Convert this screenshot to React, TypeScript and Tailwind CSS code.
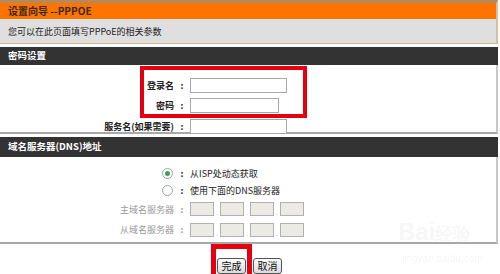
import React from "react";

const font = { fontFamily: '"Noto Sans CJK SC", "Liberation Sans", sans-serif' };

function Row({ label, children, gray }: { label: string; children: React.ReactNode; gray?: boolean }) {
  return (
    <div className="flex items-center h-[20.5px]">
      <div className={`w-[174px] text-right text-[9px] leading-none ${gray ? "text-[#9a9a9a]" : "text-[#222] font-bold"}`}>{label}</div>
      <div className={`w-[16px] text-center text-[9px] leading-none font-bold ${gray ? "text-[#9a9a9a]" : "text-[#222]"}`}>:</div>
      {children}
    </div>
  );
}

function RadioRow({ checked, label }: { checked?: boolean; label: string }) {
  return (
    <div className="flex items-center h-[17px]">
      <div className="w-[174px] flex justify-end pr-[1px]">
        <div className="w-[11px] h-[11px] rounded-full border border-[#9aa4a0] bg-white flex items-center justify-center">
          {checked && <div className="w-[5px] h-[5px] rounded-full bg-[#4a9a5a]" />}
        </div>
      </div>
      <div className="w-[16px] text-center text-[9px] leading-none font-bold text-[#222]">:</div>
      <div className="text-[9px] leading-none text-[#222]">{label}</div>
    </div>
  );
}

function IpBoxes() {
  return (
    <div className="flex items-end">
      {[0, 1, 2, 3].map((i) => (
        <React.Fragment key={i}>
          {i > 0 && <div className="w-[6px] text-center text-[8px] leading-none text-[#ccc]">.</div>}
          <div className="w-[24px] h-[14px] bg-[#eceae4] border border-[#b0b0b0]" />
        </React.Fragment>
      ))}
    </div>
  );
}

export default function App() {
  return (
    <div className="relative w-[500px] h-[274px] overflow-hidden bg-white" style={font}>
      <div className="w-[498px]">
        <div className="border-t-[3px] border-t-[#b4895c] border-r-2 border-r-[#d8bfa4] border-b border-b-[#d2b69a]">
          <div className="h-[16px] bg-[#ff7300] flex items-center pl-[8px] text-[10px] font-bold text-[#3a2a1a] leading-none">设置向导 --PPPOE</div>
          <div className="h-[24px] bg-[#dfdfdf] flex items-center pl-[8px] text-[9px] text-[#222] leading-none">您可以在此页面填写PPPoE的相关参数</div>
        </div>

        <div className="mt-[3px] h-[18px] bg-[#333333] flex items-center pl-[8px] text-[9.5px] font-bold text-white leading-none">密码设置</div>
        <div className="h-[69px] border-r-2 border-r-[#c8c8c8] border-b-2 border-b-[#a8a8a8] pt-[10px]">
          <Row label="登录名">
            <div className="w-[97px] h-[15px] border border-[#a8a8a8] bg-white" />
          </Row>
          <Row label="密码">
            <div className="w-[89px] h-[15px] border border-[#a8a8a8] bg-white" />
          </Row>
          <Row label="服务名(如果需要)">
            <div className="w-[97px] h-[15px] border border-[#a8a8a8] bg-white" />
          </Row>
        </div>

        <div className="mt-[3px] h-[20px] bg-[#333333] flex items-center pl-[8px] text-[9.5px] font-bold text-white leading-none">域名服务器(DNS)地址</div>
        <div className="h-[87px] border-r-2 border-r-[#c8c8c8] border-b-2 border-b-[#a8a8a8] pt-[8px]">
          <RadioRow checked label="从ISP处动态获取" />
          <RadioRow label="使用下面的DNS服务器" />
          <Row label="主域名服务器" gray>
            <IpBoxes />
          </Row>
          <Row label="从域名服务器" gray>
            <IpBoxes />
          </Row>
        </div>

        <div className="flex pl-[211px] h-[31px]">
          <div className="border-[5px] border-b-0 border-[#e4000f] w-[41px] h-[31px] pt-[2px] pl-[1px]">
            <button className="w-[29px] h-[16px] border border-[#555] rounded-[3px] bg-gradient-to-b from-[#fafafa] to-[#dcdcdc] text-[10px] leading-none text-[#111]">完成</button>
          </div>
          <div className="pt-[7px] pl-[1px]">
            <button className="w-[29px] h-[16px] border border-[#555] rounded-[3px] bg-gradient-to-b from-[#fafafa] to-[#dcdcdc] text-[10px] leading-none text-[#111]">取消</button>
          </div>
        </div>
      </div>

      <div className="absolute left-[140px] top-[66px] w-[167px] h-[52px] border-[4px] border-[#e4000f]" />

      <div className="absolute left-[398px] top-[220px] text-[24px] font-bold leading-none text-[#000]/[0.05]" style={{ fontFamily: '"Liberation Sans", sans-serif' }}>Bai<span className="text-[18px]">经验</span></div>
      <div className="absolute left-[402px] top-[254px] text-[10px] leading-none text-[#000]/[0.06]" style={{ fontFamily: '"Liberation Sans", sans-serif' }}>jingyan.baidu.com</div>
    </div>
  );
}
